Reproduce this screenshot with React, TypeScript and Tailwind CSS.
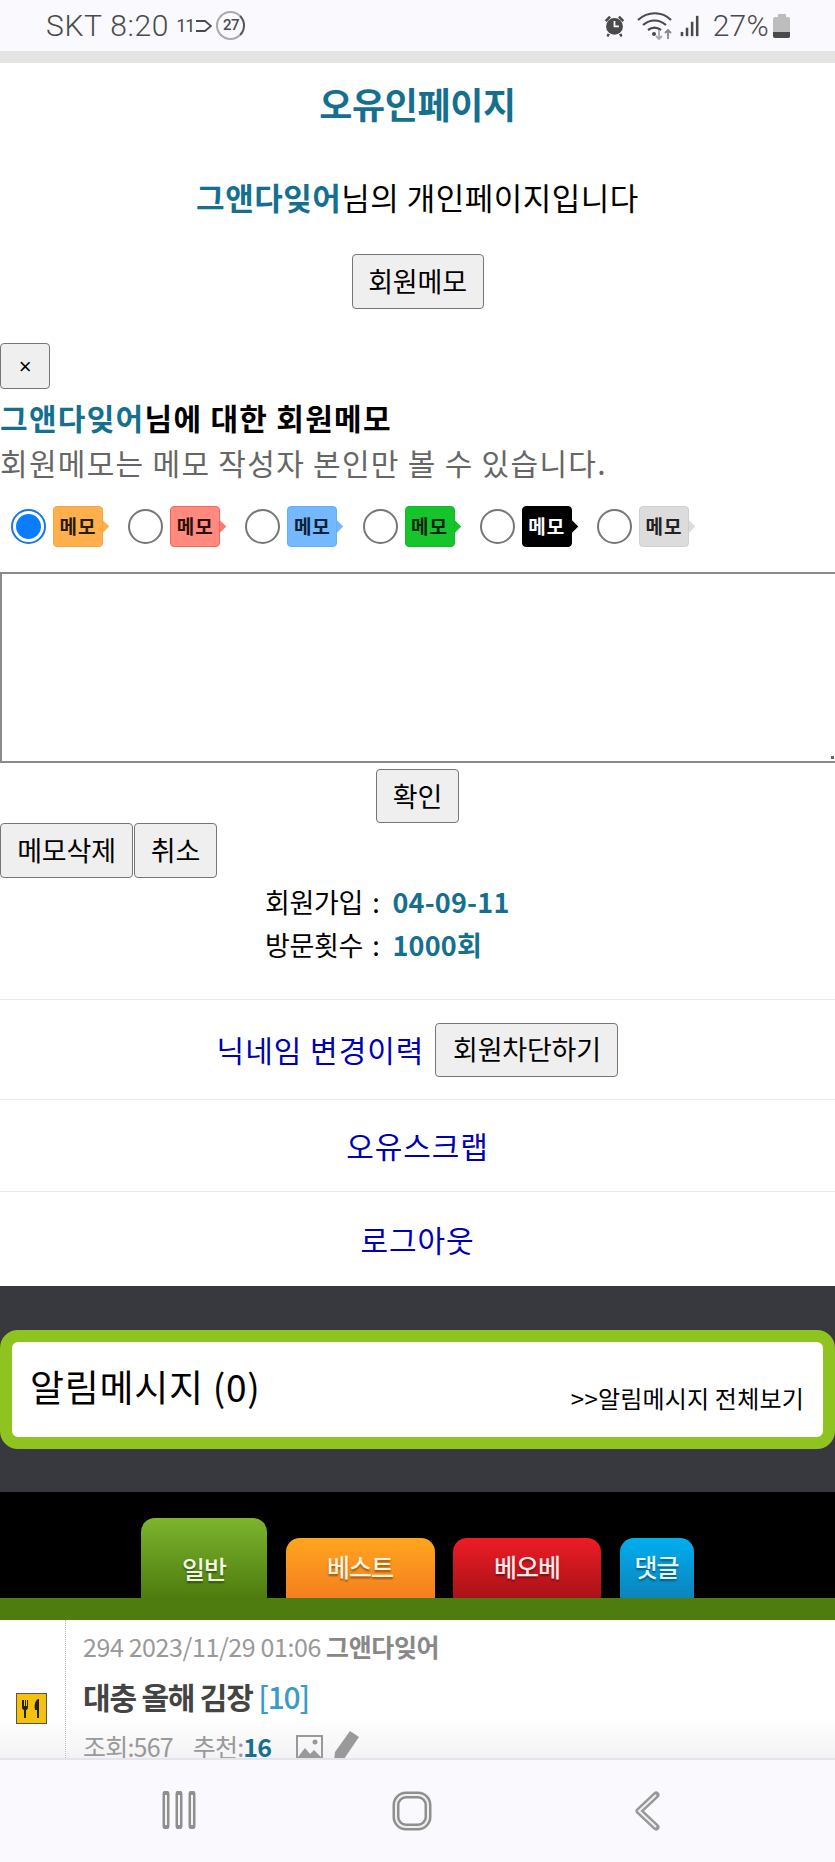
import React from 'react';

const MEMO_COLORS = [
  { box: 'bg-[#ffb04d] border-[#f5a63f]', arrow: 'bg-[#ffb04d]', text: 'text-[#2a1a05]', on: true },
  { box: 'bg-[#ff8a7d] border-[#f0675c]', arrow: 'bg-[#f9796e]', text: 'text-[#2a0f0c]', on: false },
  { box: 'bg-[#74b9ff] border-[#62aef8]', arrow: 'bg-[#74b9ff]', text: 'text-[#0c2038]', on: false },
  { box: 'bg-[#16c42c] border-[#14b828]', arrow: 'bg-[#16c42c]', text: 'text-[#04240a]', on: false },
  { box: 'bg-black border-black', arrow: 'bg-black', text: 'text-white', on: false },
  { box: 'bg-[#dcdcdc] border-[#cfcfcf]', arrow: 'bg-[#dcdcdc]', text: 'text-[#222]', on: false },
];

const TABS = [
  { label: '일반', w: 'w-[126px]', h: 'h-[80px]', bg: 'bg-gradient-to-b from-[#7cb52d] to-[#4f7c0f]', text: 'text-[#f2f7e4]' },
  { label: '베스트', w: 'w-[149px]', h: 'h-[60px]', bg: 'bg-gradient-to-b from-[#ffa51d] to-[#f47f20]', text: 'text-[#fff1dc]' },
  { label: '베오베', w: 'w-[148px]', h: 'h-[60px]', bg: 'bg-gradient-to-b from-[#ee1c25] to-[#a91217]', text: 'text-[#ffe6e6]' },
  { label: '댓글', w: 'w-[74px]', h: 'h-[60px]', bg: 'bg-gradient-to-b from-[#00aeef] to-[#0a85bd]', text: 'text-[#e4f6ff]' },
];

const btn = 'bg-[#efefef] border-[1.5px] border-[#767676] rounded-[4px] text-black text-[27px] tracking-[-0.2px]';

function StatusBar() {
  return (
    <div className="h-[51px] bg-[#f9f9fe] flex items-center justify-between pl-[46px] pr-[45px] text-[#4a4a4a] shrink-0">
      <div className="flex items-center">
        <span className="font-['Roboto',sans-serif] font-light text-[30px] tracking-[0.7px]">SKT 8:20</span>
        <span className="ml-[7px] font-['Roboto',sans-serif] text-[18px] tracking-[-1px]">11</span>
        <svg width="17" height="14" viewBox="0 0 17 14" className="ml-[1px]" fill="none" stroke="#4a4a4a" strokeWidth="1.800">
          <path d="M1 2h9l6 5-6 5H1" />
        </svg>
        <div className="ml-[4px] w-[29px] h-[29px] rounded-full border-2 border-[#aaa] border-r-[#555] flex items-center justify-center text-[15px] font-['Roboto',sans-serif] font-medium tracking-[-0.5px]">
          27
        </div>
      </div>
      <div className="flex items-center">
        <svg width="23" height="23" viewBox="0 0 24 26" fill="#4a4a4a">
          <circle cx="12" cy="14" r="9.500" />
          <path d="M1 7l5-5 2 2-5 5zM23 7l-5-5-2 2 5 5zM4 22l3 1-2 3-2-1zM20 22l-3 1 2 3 2-1z" />
          <path d="M12 8v6h5" stroke="#f9f9fe" strokeWidth="2" fill="none" />
        </svg>
        <svg width="36" height="28" viewBox="0 0 36 28" fill="none" className="ml-[11px]">
          <path d="M1 8c10-9 24-9 33 0M6 13c7-6 16-6 23 0M11 18c4-3 9-3 13 0" stroke="#4a4a4a" strokeWidth="2.200" />
          <circle cx="17" cy="22" r="2" fill="#4a4a4a" />
          <path d="M22 18v9M19 24l3 3 3-3" stroke="#aaa" strokeWidth="1.800" />
          <path d="M31 27v-9M28 21l3-3 3 3" stroke="#888" strokeWidth="1.800" />
        </svg>
        <svg width="22" height="22" viewBox="0 0 22 26" fill="#4a4a4a" className="ml-[6px]">
          <rect x="0" y="20" width="3" height="5" />
          <rect x="6" y="15" width="3" height="10" />
          <rect x="12" y="8" width="3" height="17" />
          <rect x="18" y="1" width="3" height="24" />
        </svg>
        <span className="ml-[12px] font-['Roboto',sans-serif] font-light text-[30px] tracking-[0.3px]">27%</span>
        <div className="ml-[4px] flex flex-col items-center">
          <div className="w-[8px] h-[3px] bg-[#bbb] rounded-t-[1px]" />
          <div className="w-[17px] h-[21px] rounded-[2px] bg-[#bdbdbd] flex flex-col justify-end overflow-hidden">
            <div className="h-[6px] bg-[#4a4a4a]" />
          </div>
        </div>
      </div>
    </div>
  );
}

function MemoChoice({ c }: { c: (typeof MEMO_COLORS)[number] }) {
  return (
    <div className="flex items-center w-[117.200px] shrink-0">
      {c.on ? (
        <div className="w-[35px] h-[35px] rounded-full border-2 border-[#1a73e8] flex items-center justify-center">
          <div className="w-[25px] h-[25px] rounded-full bg-[#0a7cff]" />
        </div>
      ) : (
        <div className="w-[35px] h-[35px] rounded-full border-2 border-[#767676]" />
      )}
      <div className="relative ml-[7px] h-[41px] w-[50px]">
        <div className={`absolute right-[-4px] top-[15px] w-[11px] h-[11px] rotate-45 ${c.arrow}`} />
        <div className={`relative h-full w-full border rounded-[4px] flex items-center justify-center font-bold text-[19px] tracking-[1px] ${c.box} ${c.text}`}>
          메모
        </div>
      </div>
    </div>
  );
}

function LinkRow({ h, children }: { h: string; children: React.ReactNode }) {
  return <div className={`${h} shrink-0 border-b border-[#eaeaea] flex items-center justify-center`}>{children}</div>;
}

function NavIcons() {
  return (
    <div className="h-[104px] shrink-0 bg-[#f9f9fe] border-t-2 border-[#e4e4ea] relative">
      <div className="absolute left-0 right-0 top-[31px] flex">
        <svg width="36" height="38" viewBox="0 0 36 38" fill="none" className="ml-[161px]">
          <path d="M5 3v32M18 3v32M31 3v32" stroke="#8f8f8f" strokeWidth="7" strokeLinecap="round" />
          <path d="M5 4v30M18 4v30M31 4v30" stroke="#f4f4f4" strokeWidth="2" />
        </svg>
        <svg width="40" height="40" viewBox="0 0 40 40" fill="none" className="ml-[195px]">
          <rect x="4" y="4" width="32" height="32" rx="10" stroke="#8f8f8f" strokeWidth="7" />
          <rect x="4" y="4" width="32" height="32" rx="10" stroke="#f0f0f0" strokeWidth="2" />
        </svg>
        <svg width="26" height="40" viewBox="0 0 26 40" fill="none" className="ml-[202px]">
          <path d="M22 4L5 20l17 16" stroke="#989898" strokeWidth="7" strokeLinecap="round" strokeLinejoin="round" />
          <path d="M22 4L5 20l17 16" stroke="#f0f0f0" strokeWidth="2" />
        </svg>
      </div>
    </div>
  );
}

export default function App() {
  return (
    <div className="w-[835px] h-[1862px] overflow-hidden bg-white flex flex-col font-['Noto_Sans_CJK_KR',sans-serif] text-black">
      <StatusBar />
      <div className="h-[12px] bg-[#e4e4e2] shrink-0" />

      <div className="h-[80px] shrink-0 flex items-center justify-center text-[#156f8f] font-bold text-[36px] tracking-[-0.4px]">
        오유인페이지
      </div>
      <div className="h-[22px] shrink-0" />
      <div className="h-[64px] shrink-0 flex items-center justify-center text-[31px] tracking-[0.5px]">
        <span className="text-[#156f8f] font-bold">그앤다잊어</span>님의 개인페이지입니다
      </div>
      <div className="flex justify-center pt-[25px] shrink-0">
        <button className={`${btn} w-[132px] h-[55px]`}>회원메모</button>
      </div>

      <button className={`${btn} mt-[34px] w-[50px] h-[46px] shrink-0 !text-[22px] font-['Liberation_Sans',sans-serif]`}>×</button>
      <div className="h-[56px] shrink-0 flex items-center font-bold text-[30px] tracking-[1.300px]">
        <span className="text-[#156f8f]">그앤다잊어</span>님에 대한 회원메모
      </div>
      <div className="h-[34px] shrink-0 flex items-center text-[#666] text-[30px] tracking-[1.300px]">
        회원메모는 메모 작성자 본인만 볼 수 있습니다.
      </div>
      <div className="h-[41px] mt-[27px] pl-[11px] flex shrink-0">
        {MEMO_COLORS.map((c, i) => (
          <MemoChoice key={i} c={c} />
        ))}
      </div>

      <div className="relative mt-[25px] shrink-0">
        <textarea className="block w-[840px] h-[191px] border-2 border-[#8a8a8a] outline-none bg-white resize-none" />
        <div className="absolute right-[1px] bottom-[4px] w-[3px] h-[3px] bg-[#666]" />
      </div>

      <div className="flex justify-center mt-[6px] shrink-0">
        <button className={`${btn} w-[83px] h-[54px]`}>확인</button>
      </div>
      <div className="flex gap-[1px] shrink-0">
        <button className={`${btn} w-[133px] h-[55px]`}>메모삭제</button>
        <button className={`${btn} w-[83px] h-[55px]`}>취소</button>
      </div>

      <div className="pl-[265px] pt-[3px] shrink-0 text-[27px] tracking-[-0.3px]">
        <div className="h-[43px] flex items-center">
          회원가입 <span className="ml-[9px] mr-[13px]">:</span>
          <span className="text-[#156f8f] font-bold tracking-[0.2px]">04-09-11</span>
        </div>
        <div className="h-[43px] flex items-center">
          방문횟수 <span className="ml-[9px] mr-[13px]">:</span>
          <span className="text-[#156f8f] font-bold tracking-[0.2px]">1000회</span>
        </div>
      </div>
      <div className="h-[33px] shrink-0 border-b border-[#eaeaea]" />

      <LinkRow h="h-[100px]">
        <span className="text-[#0000b4] text-[30px] tracking-[1px]">닉네임 변경이력</span>
        <button className={`${btn} ml-[11px] w-[183px] h-[54px]`}>회원차단하기</button>
      </LinkRow>
      <LinkRow h="h-[92px]">
        <span className="text-[#0000b4] text-[30px] tracking-[0.9px]">오유스크랩</span>
      </LinkRow>
      <div className="h-[94px] shrink-0 flex items-center justify-center">
        <span className="text-[#0000b4] text-[30px] tracking-[0.9px]">로그아웃</span>
      </div>

      <div className="h-[206px] shrink-0 bg-[#38393e] pt-[44px]">
        <div className="h-[119px] border-[12px] border-[#8fc31f] rounded-[18px] bg-white flex items-start justify-between pl-[18px] pr-[19px]">
          <span className="text-[37px] tracking-[0.7px] leading-none mt-[26px]">알림메시지 (0)</span>
          <span className="text-[24px] tracking-[0.2px] leading-none mt-[44px]">&gt;&gt;알림메시지 전체보기</span>
        </div>
      </div>

      <div className="h-[106px] shrink-0 bg-black flex items-end pl-[141px] gap-[18.500px]">
        {TABS.map((t) => (
          <div
            key={t.label}
            className={`${t.w} ${t.h} ${t.bg} ${t.text} rounded-t-[14px] flex items-start justify-center font-medium text-[25px] tracking-[-1px] [text-shadow:0_2px_2px_rgba(0,0,0,0.4)]`}
          >
            <span className={t.label === '일반' ? 'mt-[32px]' : 'mt-[10px]'}>{t.label}</span>
          </div>
        ))}
      </div>
      <div className="h-[22px] shrink-0 bg-[#4f7c0f]" />

      <div className="flex-1 min-h-0 overflow-hidden bg-gradient-to-b from-white from-70% to-[#f3f3f5] flex">
        <div className="w-[66px] shrink-0 border-r border-dotted border-[#bbb] flex justify-center pt-[73px] pr-[3px]">
          <svg width="31" height="31" viewBox="0 0 31 31">
            <rect x="0.500" y="0.500" width="30" height="30" fill="#f4c20d" stroke="#555" />
            <path d="M6 7v7c0 2 1 3 2 3v8h2v-8c1 0 2-1 2-3V7h-1v6h-1V7H9v6H8V7zM22 6c-3 2-4 6-3 11h2v8h2V6z" fill="#222" />
          </svg>
        </div>
        <div className="pl-[17px] pt-[9px]">
          <div className="h-[36px] flex items-center text-[#999] text-[25px] tracking-[-0.4px]">
            294 2023/11/29 01:06&nbsp;<span className="font-bold text-[#888]">그앤다잊어</span>
          </div>
          <div className="h-[44px] mt-[9px] flex items-center font-bold text-[#444] text-[30px] tracking-[-1.200px]">
            대충 올해 김장&nbsp;<span className="font-medium text-[#3a9bc9]">[10]</span>
          </div>
          <div className="h-[36px] mt-[11px] flex items-center text-[#999] text-[25px] tracking-[-0.8px]">
            조회:567
            <span className="ml-[20px]">추천:</span>
            <span className="text-[#156f8f] font-bold">16</span>
            <svg width="27" height="24" viewBox="0 0 27 24" className="ml-[25px]">
              <rect x="1" y="1" width="25" height="22" fill="none" stroke="#999" strokeWidth="2" />
              <path d="M2 22l7-9 5 6 4-4 7 7z" fill="#999" />
              <circle cx="19" cy="7" r="2.500" fill="#999" />
            </svg>
            <svg width="28" height="36" viewBox="0 0 28 36" className="ml-[10px]">
              <path d="M17 2l9 6-15 22-10 3 1-10z" fill="#999" />
            </svg>
          </div>
        </div>
      </div>

      <NavIcons />
    </div>
  );
}
